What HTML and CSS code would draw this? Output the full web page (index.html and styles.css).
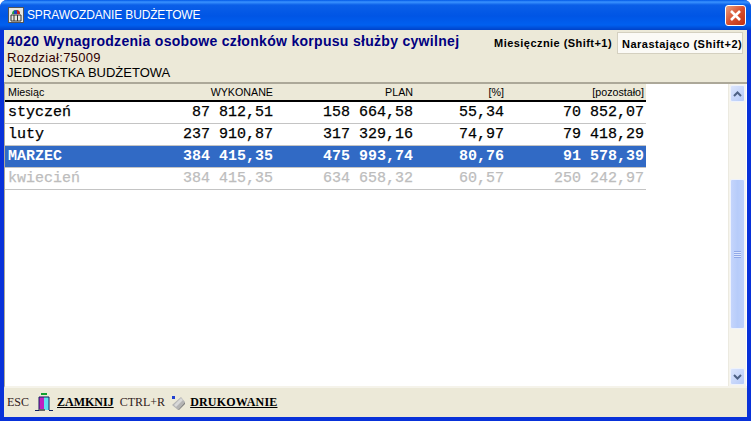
FILE: index.html
```html
<!DOCTYPE html>
<html lang="pl">
<head>
  <meta charset="UTF-8">
  <title>Sprawozdanie budżetowe</title>
  <link rel="stylesheet" href="styles.css">
</head>
<body>
  <div class="okno">
    <div class="belka">
      <svg class="ikona" width="16" height="16" viewBox="0 0 16 16">
        <rect x="0.5" y="0.5" width="15" height="15" fill="#e8e8e0" stroke="#555"/>
        <path d="M4 7a4 4 0 0 1 8 0z" fill="#20a040"/>
        <path d="M8 3a4 4 0 0 1 4 4H8z" fill="#d02020"/>
        <path d="M6 3.500h3v3.500H6z" fill="#2040c0"/>
        <path d="M3 8v6M6 8v6M9.500 8v6M13 8v6M3 8h10M3 14h10" stroke="#333" fill="none"/>
      </svg>
      <span class="tytul">SPRAWOZDANIE BUDŻETOWE</span>
      <div class="zamknij">
        <svg width="13" height="13" viewBox="0 0 13 13"><path d="M2 2l9 9M11 2l-9 9" stroke="#fff" stroke-width="2.600"/></svg>
      </div>
    </div>

    <div class="naglowek">
      <div class="opis">
        <div class="konto">4020 Wynagrodzenia osobowe członków korpusu służby cywilnej</div>
        <div class="rozdzial">Rozdział:75009</div>
        <div class="jednostka">JEDNOSTKA BUDŻETOWA</div>
      </div>
      <div class="zakladki">
        <div class="zakladka">Miesięcznie (Shift+1)</div>
        <div class="zakladka aktywna">Narastająco (Shift+2)</div>
      </div>
    </div>

    <div class="srodek">
      <div class="lista">
        <div class="wiersz tytuly">
          <div class="k-nazwa">Miesiąc</div>
          <div class="k-wyk">WYKONANE</div>
          <div class="k-plan">PLAN</div>
          <div class="k-proc">[%]</div>
          <div class="k-poz">[pozostało]</div>
        </div>
        <div class="wiersz">
          <div class="k-nazwa">styczeń</div>
          <div class="k-wyk">87 812,51</div>
          <div class="k-plan">158 664,58</div>
          <div class="k-proc">55,34</div>
          <div class="k-poz">70 852,07</div>
        </div>
        <div class="wiersz">
          <div class="k-nazwa">luty</div>
          <div class="k-wyk">237 910,87</div>
          <div class="k-plan">317 329,16</div>
          <div class="k-proc">74,97</div>
          <div class="k-poz">79 418,29</div>
        </div>
        <div class="wiersz wybrany">
          <div class="k-nazwa">MARZEC</div>
          <div class="k-wyk">384 415,35</div>
          <div class="k-plan">475 993,74</div>
          <div class="k-proc">80,76</div>
          <div class="k-poz">91 578,39</div>
        </div>
        <div class="wiersz przyszly">
          <div class="k-nazwa">kwiecień</div>
          <div class="k-wyk">384 415,35</div>
          <div class="k-plan">634 658,32</div>
          <div class="k-proc">60,57</div>
          <div class="k-poz">250 242,97</div>
        </div>
      </div>

      <div class="suwak">
        <div class="przycisk">
          <svg width="9" height="6" viewBox="0 0 9 6"><path d="M1 5l3.500-3.500L8 5" fill="none" stroke="#4d6185" stroke-width="2"/></svg>
        </div>
        <div class="tor">
          <div class="uchwyt"><span class="grip"></span></div>
        </div>
        <div class="przycisk">
          <svg width="9" height="6" viewBox="0 0 9 6"><path d="M1 1l3.500 3.500L8 1" fill="none" stroke="#4d6185" stroke-width="2"/></svg>
        </div>
      </div>
    </div>

    <div class="stopka">
      <span class="klawisz">ESC</span>
      <svg class="ikona-drzwi" width="18" height="20" viewBox="0 0 18 20">
        <rect x="6" y="0" width="6" height="2" fill="#10a030"/>
        <rect x="4" y="4" width="5" height="13" fill="#c020c0"/>
        <rect x="9" y="4" width="5" height="13" fill="#60e0f0"/>
        <path d="M4 4h10M4 4v13M14 4v13" stroke="#102060" fill="none"/>
        <path d="M0 17.500h4M14 17.500h4" stroke="#102060"/>
        <rect x="4" y="16" width="6" height="2" fill="#666"/>
      </svg>
      <a class="akcja">ZAMKNIJ</a>
      <span class="klawisz klawisz2">CTRL+R</span>
      <svg class="ikona-druk" width="15" height="16" viewBox="0 0 15 16">
        <path d="M1 10l9-8 4 5-7 8z" fill="#b4b4b4"/>
        <path d="M3 10l7-7 2 2-7 7z" fill="#d8d8d8"/>
        <path d="M7 15l7-8v2l-6 6z" fill="#808080"/>
        <rect x="1" y="1" width="3" height="3" fill="#2040d0"/>
      </svg>
      <a class="akcja druk">DRUKOWANIE</a>
    </div>
  </div>
</body>
</html>
```

FILE: styles.css
```css
html, body {
  margin: 0;
  height: 100%;
  overflow: hidden;
}

.okno {
  width: 751px;
  height: 421px;
  box-sizing: border-box;
  display: flex;
  flex-direction: column;
  background: #ece9d8;
  border: solid #0831d9;
  border-width: 0 4px 4px 4px;
  border-radius: 7px 7px 0 0;
  font-family: "Liberation Sans", Arial, sans-serif;
  color: #000;
}

.belka {
  height: 30px;
  flex: none;
  margin: 0 -4px;
  padding: 0 5px 0 8px;
  display: flex;
  align-items: center;
  border-radius: 7px 7px 0 0;
  background: linear-gradient(to bottom, #0058e6 0, #3a93ff 2px, #0a5fe8 5px, #0055e5 16px, #0060f0 25px, #0042c8 30px);
}

.ikona {
  flex: none;
}

.tytul {
  margin-left: 3px;
  color: #fff;
  font-size: 12px;
  letter-spacing: -0.15px;
}

.zamknij {
  margin-left: auto;
  width: 21px;
  height: 21px;
  display: flex;
  align-items: center;
  justify-content: center;
  box-sizing: border-box;
  border: 1px solid #fff;
  border-radius: 3px;
  background: linear-gradient(135deg, #e8a080, #d85030 50%, #c03010);
}

.naglowek {
  height: 54px;
  flex: none;
  display: flex;
  justify-content: space-between;
  box-sizing: border-box;
  padding: 0 0 0 3px;
  border-bottom: 2px solid #aca899;
}

.konto {
  margin-top: 3px;
  font-size: 14px;
  line-height: 17px;
  font-weight: bold;
  letter-spacing: 0.3px;
  color: #000080;
}

.rozdzial, .jednostka {
  font-size: 13px;
  line-height: 15px;
  color: #300000;
}

.rozdzial {
  letter-spacing: 0.3px;
}

.jednostka {
  color: #000;
}

.zakladki {
  display: flex;
  align-items: flex-start;
  margin-top: 2px;
  margin-right: 4px;
}

.zakladka {
  height: 22px;
  line-height: 22px;
  padding: 0 3px;
  font-size: 11px;
  font-weight: bold;
  letter-spacing: 0.45px;
  white-space: nowrap;
}

.aktywna {
  width: 126px;
  margin-left: 2px;
  padding: 0 0 0 4px;
  background: #fbfaf6;
  border: 1px solid #d4d0c0;
  box-sizing: border-box;
  line-height: 23px;
  letter-spacing: 0.5px;
}

.srodek {
  height: 302px;
  flex: none;
  display: flex;
  background: #fff;
  border-left: 1px solid #aca899;
  border-bottom: 2px solid #f5f3ea;
}

.lista {
  flex: 1;
}

.wiersz {
  width: 641px;
  height: 22px;
  box-sizing: border-box;
  display: flex;
  align-items: center;
  border-bottom: 1px solid #c4c4c4;
  font-family: "Liberation Mono", "Courier New", monospace;
  font-size: 15px;
  color: #000;
  -webkit-text-stroke: 0.25px currentColor;
}

.wiersz > div {
  text-align: right;
  white-space: pre;
}

.wiersz > .k-nazwa {
  width: 91px;
  padding-left: 3px;
  box-sizing: border-box;
  text-align: left;
}

.k-wyk { width: 177px; }
.k-plan { width: 140px; }
.k-proc { width: 91px; }
.k-poz { width: 140px; }

.tytuly {
  height: 18px;
  background: #ece9d8;
  border-bottom: 2px solid #000;
  font-family: "Liberation Sans", Arial, sans-serif;
  font-size: 10.700px;
  -webkit-text-stroke: 0;
}

.wybrany {
  background: #316ac5;
  color: #fff;
  font-weight: bold;
  -webkit-text-stroke: 0;
}

.przyszly {
  color: #bdbdbd;
}

.suwak {
  width: 18px;
  flex: none;
  margin-right: 1px;
  padding: 1px 0;
  box-sizing: border-box;
  display: flex;
  flex-direction: column;
  background: #f6f4ec;
  border-left: 1px solid #eceae0;
}

.przycisk {
  height: 15px;
  margin: 0 1px;
  flex: none;
  display: flex;
  align-items: center;
  justify-content: center;
  border: 1px solid #eef2fc;
  border-radius: 2px;
  background: linear-gradient(135deg, #dbe5fd, #b7cbf8);
}

.tor {
  flex: 1;
  padding-top: 77px;
  padding-bottom: 39px;
  display: flex;
}

.uchwyt {
  flex: 1;
  margin: 0 1px;
  display: flex;
  align-items: center;
  justify-content: center;
  border: 1px solid #eef2fc;
  border-radius: 2px;
  background: linear-gradient(to right, #c5d5fc, #b7ccfa 50%, #bdd0fb);
}

.grip {
  width: 7px;
  height: 7px;
  background: repeating-linear-gradient(to bottom, #90a8e8 0, #90a8e8 1px, #dbe5fd 1px, #dbe5fd 2px);
}

.stopka {
  flex: 1;
  display: flex;
  align-items: center;
  padding-left: 3px;
  font-family: "Liberation Serif", "Times New Roman", serif;
  font-size: 12px;
}

.klawisz {
  color: #302020;
}

.klawisz2 {
  margin-left: 6px;
}

.ikona-drzwi {
  margin-left: 6px;
}

.ikona-druk {
  margin-left: 6px;
}

.akcja {
  margin-left: 4px;
  font-weight: bold;
  text-decoration: underline;
}

.druk {
  letter-spacing: 0.2px;
}
```
